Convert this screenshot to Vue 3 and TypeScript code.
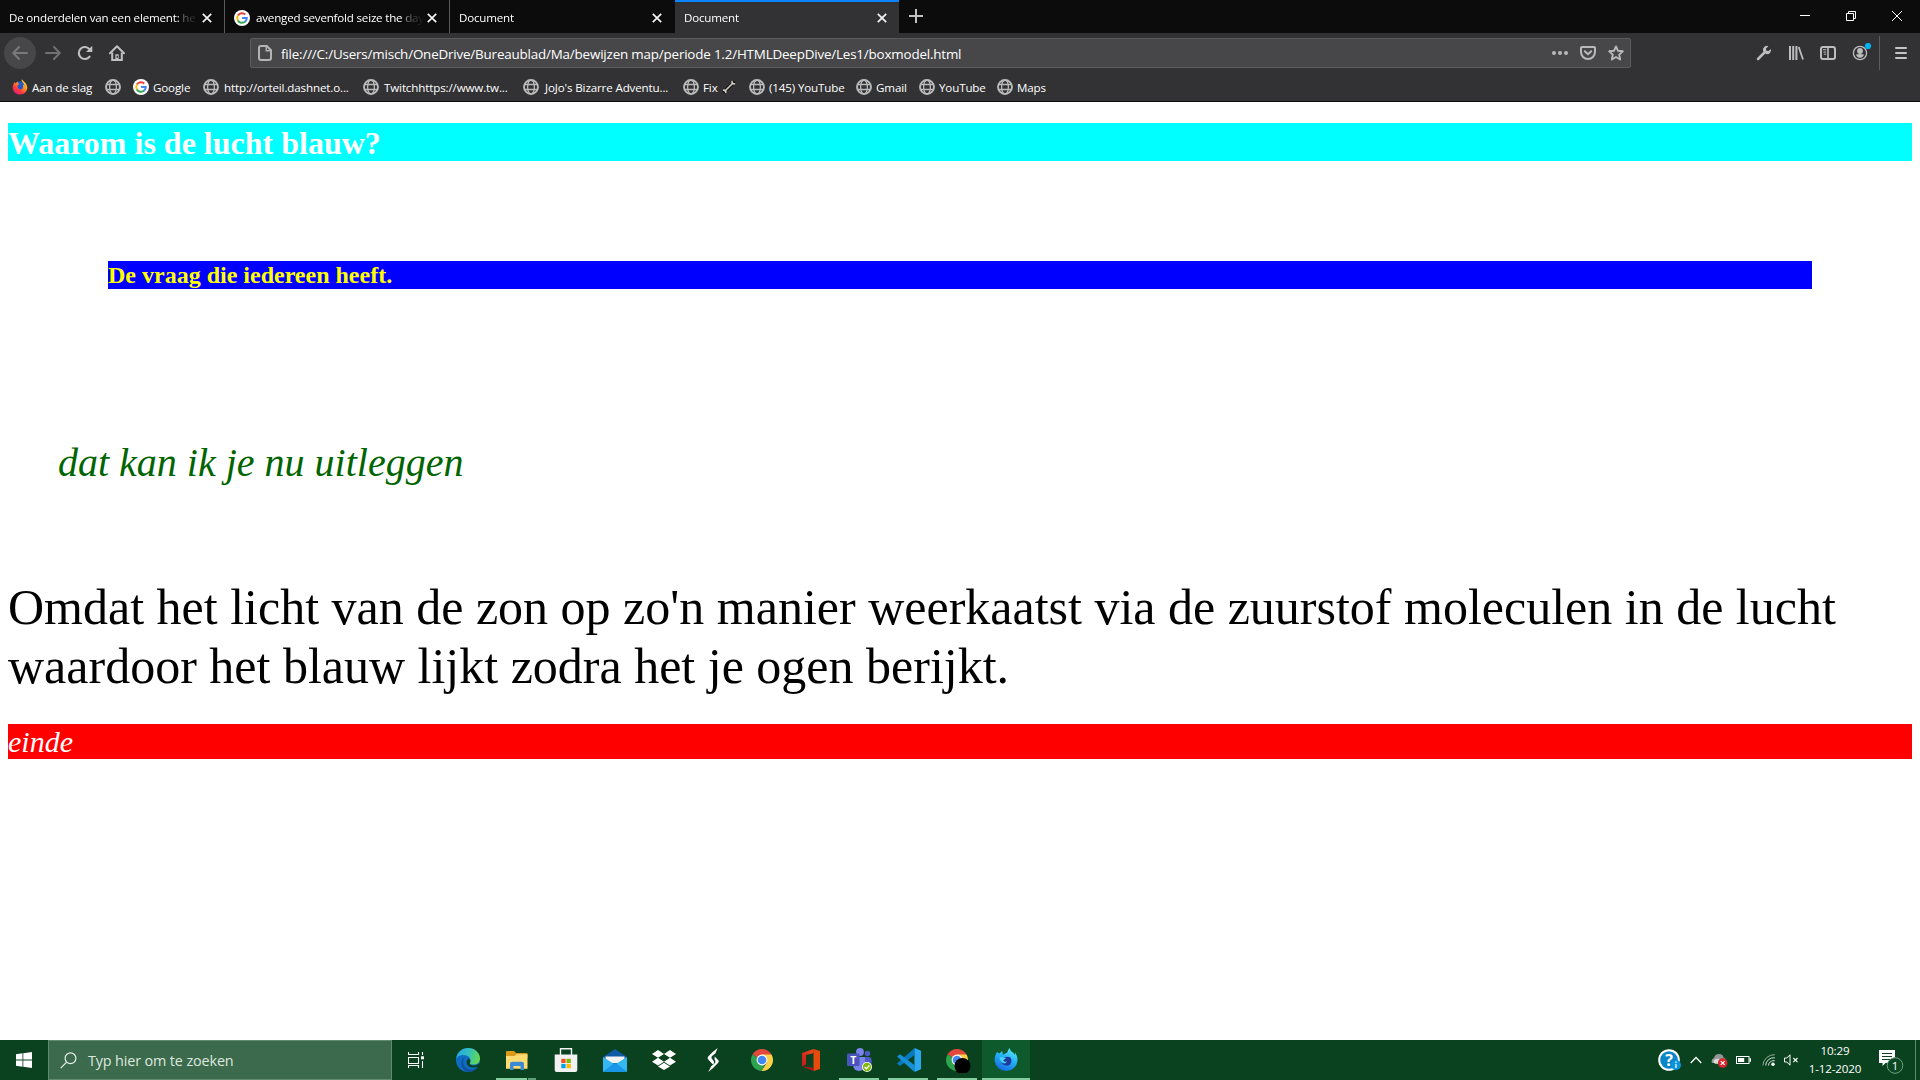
<script setup lang="ts">
interface Tab {
  title: string
  google?: boolean
  active?: boolean
}

interface Bookmark {
  label: string
  icon: 'firefox' | 'globe' | 'google'
  width: number
  gap?: number
  wrench?: boolean
}

const tabs: Tab[] = [
  { title: 'De onderdelen van een element: he' },
  { title: 'avenged sevenfold seize the day', google: true },
  { title: 'Document' },
  { title: 'Document', active: true },
]

const bookmarks: Bookmark[] = [
  { label: 'Aan de slag', icon: 'firefox', width: 93 },
  { label: '', icon: 'globe', width: 28 },
  { label: 'Google', icon: 'google', width: 70 },
  { label: 'http://orteil.dashnet.o...', icon: 'globe', width: 160, gap: 5 },
  { label: 'Twitchhttps://www.tw...', icon: 'globe', width: 160, gap: 5 },
  { label: "JoJo's Bizarre Adventu...", icon: 'globe', width: 160, gap: 6 },
  { label: 'Fix', icon: 'globe', width: 66, wrench: true },
  { label: '(145) YouTube', icon: 'globe', width: 107 },
  { label: 'Gmail', icon: 'globe', width: 63 },
  { label: 'YouTube', icon: 'globe', width: 78 },
  { label: 'Maps', icon: 'globe', width: 60 },
]
</script>

<template>
  <div class="screen">
    <svg class="defs" width="0" height="0">
      <defs>
        <symbol id="google" viewBox="0 0 16 16">
          <circle cx="8" cy="8" r="8" fill="#fff" />
          <path d="M3.9 5.6A4.8 4.8 0 0 1 11.3 4.5" fill="none" stroke="#ea4335" stroke-width="2" />
          <path d="M3.9 5.5A4.9 4.9 0 0 0 3.9 10.5" fill="none" stroke="#fbbc05" stroke-width="2" />
          <path d="M3.9 10.4A4.8 4.8 0 0 0 11.2 11.6" fill="none" stroke="#34a853" stroke-width="2" />
          <path d="M8.1 8H12.8A4.8 4.8 0 0 1 11.1 11.7" fill="none" stroke="#4285f4" stroke-width="2" />
        </symbol>
        <symbol id="globe" viewBox="0 0 16 16">
          <g fill="none" stroke="#b9b9ba">
            <circle cx="8" cy="8" r="7" stroke-width="1.9" />
            <ellipse cx="8" cy="8" rx="3.4" ry="7" stroke-width="1.3" />
            <path d="M1.8 5.5H14.2M1.8 10.5H14.2" stroke-width="1.3" />
          </g>
        </symbol>
        <linearGradient id="foxFire" x1="0.9" y1="0" x2="0.2" y2="1">
          <stop offset="0" stop-color="#fff044" />
          <stop offset="0.4" stop-color="#ff9a1f" />
          <stop offset="0.7" stop-color="#ff3b3b" />
          <stop offset="1" stop-color="#e31587" />
        </linearGradient>
        <linearGradient id="foxBlue" x1="0.8" y1="0" x2="0.3" y2="1">
          <stop offset="0" stop-color="#5ff0f4" />
          <stop offset="0.45" stop-color="#25b2f8" />
          <stop offset="1" stop-color="#1768e0" />
        </linearGradient>
        <linearGradient id="edgeTop" x1="0" y1="0.3" x2="1" y2="0.5">
          <stop offset="0" stop-color="#25a7e0" />
          <stop offset="0.5" stop-color="#33c0c0" />
          <stop offset="1" stop-color="#66d94c" />
        </linearGradient>
        <linearGradient id="officeRed" x1="0" y1="1" x2="1" y2="0">
          <stop offset="0" stop-color="#c4161c" />
          <stop offset="1" stop-color="#f24a1d" />
        </linearGradient>
        <symbol id="firefox" viewBox="0 0 16 16">
          <circle cx="8" cy="8.6" r="6.3" fill="#2358c9" />
          <path d="M2.1 3.2C2.7 3.4 3.2 4 3.3 4.4L5.4 2.6C5.4 3.7 5.8 4.4 7.3 4.8C6.9 5.7 5.7 6 5.5 6.8C5.3 9 6.8 10.7 8.9 10.4C11.5 10.1 11.7 7.1 10.3 5.6C12.4 6 12.3 7.3 12.4 8C12.8 5 10.8 3.6 9.8 2.3C9.4 1.4 9.7.7 10 .2C10.4 2 15.2 3.6 15.3 8.6C15.2 12.8 12.2 15.6 8 15.6C3.6 15.6.7 12.3.7 8.3C.7 6 1.8 5 2.1 3.2Z" fill="url(#foxFire)" />
        </symbol>
        <symbol id="chrome" viewBox="0 0 24 24">
          <path d="M12 12L2.5 6.5A11 11 0 0 1 21.5 6.5Z" fill="#e2493c" />
          <path d="M12 12L2.5 6.5A11 11 0 0 0 11.5 23L16 14Z" fill="#2fa44f" />
          <path d="M12 12V6.5H21.5A11 11 0 0 1 11.5 23L16.8 14.5Z" fill="#fcd14a" />
          <circle cx="12" cy="12" r="5.4" fill="#fff" />
          <circle cx="12" cy="12" r="4.3" fill="#4286ee" />
        </symbol>
      </defs>
    </svg>

    <header class="tabs">
      <div v-for="(tab, i) in tabs" :key="i" class="tab" :class="{ active: tab.active }">
        <svg v-if="tab.google" class="favicon" width="16" height="16"><use href="#google" /></svg>
        <span class="title">{{ tab.title }}</span>
        <svg class="close" width="10" height="10" viewBox="0 0 10 10"><path d="M.8.8L9.2 9.2M9.2.8L.8 9.2" stroke="#f4f4f5" stroke-width="1.7" /></svg>
      </div>
      <svg class="plus" width="14" height="14" viewBox="0 0 14 14"><path d="M7 0V14M0 7H14" stroke="#c2c2c3" stroke-width="2" /></svg>
      <div class="window-controls">
        <svg width="10" height="11" viewBox="0 0 10 11"><path d="M0 5.5H10" stroke="#fff" /></svg>
        <svg width="10" height="10" viewBox="0 0 10 10"><path d="M.5 2.5H7.5V9.5H.5ZM2.5 2.5V.5H9.5V7.5H7.5" fill="none" stroke="#fff" /></svg>
        <svg width="10" height="10" viewBox="0 0 10 10"><path d="M0 0L10 10M10 0L0 10" stroke="#fff" /></svg>
      </div>
    </header>

    <nav class="toolbar">
      <div class="back">
        <svg width="16" height="14" viewBox="0 0 16 14"><path d="M15 7H1.5M7 1L1.2 7L7 13" fill="none" stroke="#79797b" stroke-width="2" stroke-linecap="round" stroke-linejoin="round" /></svg>
      </div>
      <svg class="forward" width="16" height="14" viewBox="0 0 16 14"><path d="M1 7H14.5M9 1L14.8 7L9 13" fill="none" stroke="#707072" stroke-width="2" stroke-linecap="round" stroke-linejoin="round" /></svg>
      <svg class="reload" width="16" height="16" viewBox="0 0 16 16"><path d="M12.4 4.1A6 6 0 1 0 12.6 11.6" fill="none" stroke="#c0c0c1" stroke-width="2.1" stroke-linecap="round" /><path d="M15.3.8V7H9.1Z" fill="#c0c0c1" /></svg>
      <svg class="home" width="16" height="16" viewBox="0 0 16 16"><path d="M1 8.2L8 1.2L15 8.2" fill="none" stroke="#c0c0c1" stroke-width="2" stroke-linecap="round" stroke-linejoin="round" /><path d="M3.2 7.5V15H12.8V7.5" fill="none" stroke="#c0c0c1" stroke-width="2" /><path d="M6.3 15V9.3H9.7V15" fill="#c0c0c1" /><rect x="7.5" y="10.8" width="1.4" height="2" fill="#323234" /></svg>
      <div class="urlbar">
        <svg width="14" height="16" viewBox="0 0 14 16"><path d="M3 1H8.8L13 5.2V13A2 2 0 0 1 11 15H3A2 2 0 0 1 1 13V3A2 2 0 0 1 3 1Z" fill="none" stroke="#b4b4b5" stroke-width="2" /><path d="M8.3 1V5.7H13" fill="none" stroke="#b4b4b5" stroke-width="1.4" /></svg>
        <span class="url">file:///C:/Users/misch/OneDrive/Bureaublad/Ma/bewijzen map/periode 1.2/HTMLDeepDive/Les1/boxmodel.html</span>
        <svg class="dots" width="16" height="4" viewBox="0 0 16 4"><g fill="#b9b9ba"><circle cx="2" cy="2" r="2" /><circle cx="8" cy="2" r="2" /><circle cx="14" cy="2" r="2" /></g></svg>
        <svg class="pocket" width="16" height="14" viewBox="0 0 16 14"><path d="M2.2 1H13.8A1.1 1.1 0 0 1 15 2.1V6A7 7 0 0 1 1 6V2.1A1.1 1.1 0 0 1 2.2 1Z" fill="none" stroke="#b9b9ba" stroke-width="2" /><path d="M4.8 5.2L8 8.2L11.2 5.2" fill="none" stroke="#b9b9ba" stroke-width="2" stroke-linecap="round" stroke-linejoin="round" /></svg>
        <svg class="star" width="16" height="16" viewBox="0 0 16 16"><path d="M8 1.4L10 5.8L14.8 6.3L11.2 9.6L12.2 14.5L8 12L3.8 14.5L4.8 9.6L1.2 6.3L6 5.8Z" fill="none" stroke="#b9b9ba" stroke-width="1.9" stroke-linejoin="round" /></svg>
      </div>
      <div class="tools">
        <svg width="16" height="16" viewBox="0 0 16 16"><path d="M2 14L9 7" stroke="#bdbdbe" stroke-width="2.5" stroke-linecap="round" /><path d="M12.4 1.2A4 4 0 0 0 7 5.9L10.1 9A4 4 0 0 0 14.9 4L12.5 6L10.3 5.8L10 3.6Z" fill="#bdbdbe" /></svg>
        <svg width="16" height="16" viewBox="0 0 16 16"><path d="M2 1V15M5.2 1V15M8.4 1V15" stroke="#bdbdbe" stroke-width="2" /><path d="M10.7 2L15 14.5" stroke="#bdbdbe" stroke-width="1.8" /></svg>
        <svg width="16" height="16" viewBox="0 0 16 16"><rect x="1" y="2" width="14" height="12" rx="2" fill="none" stroke="#bdbdbe" stroke-width="2" /><path d="M8 2V14" stroke="#bdbdbe" stroke-width="1.6" /><path d="M3 4.7H6.3M3.4 7H6.3M3.8 9.2H6.3" stroke="#bdbdbe" /></svg>
        <svg width="20" height="20" viewBox="0 0 20 20"><circle cx="8" cy="11" r="6.6" fill="none" stroke="#bdbdbe" stroke-width="1.3" /><circle cx="8" cy="9" r="2.9" fill="#bdbdbe" /><path d="M3.9 12.4Q8 11.8 12.1 12.4Q10.6 15.8 8 15.8Q5.4 15.8 3.9 12.4Z" fill="#bdbdbe" /><circle cx="16" cy="4" r="3.1" fill="#00b3f4" /></svg>
      </div>
      <svg class="menu" width="12" height="12" viewBox="0 0 12 12"><path d="M1 1H11M1 6H11M1 11H11" stroke="#c4c4c5" stroke-width="2" stroke-linecap="round" /></svg>
    </nav>

    <div class="bookmarks">
      <div v-for="(mark, i) in bookmarks" :key="i" class="bookmark" :style="{ width: mark.width + 'px', gap: (mark.gap ?? 4) + 'px' }">
        <svg width="16" height="16"><use :href="'#' + mark.icon" /></svg>
        <span>{{ mark.label }}</span>
        <svg v-if="mark.wrench" class="wrench" width="14" height="14" viewBox="0 0 14 14"><path d="M2.5 11.5L11.5 2.5" stroke="#111" stroke-width="3.4" stroke-linecap="round" /><path d="M2.5 11.5L11.3 2.7" stroke="#c9c3bb" stroke-width="1.7" /><path d="M1 10.2L2.6 10L3.9 11.4L3.6 13M10 .9L10.3 3.6L13.1 3.9" fill="none" stroke="#d2cdc6" stroke-width="1.5" /></svg>
      </div>
    </div>

    <main class="page">
      <h1>Waarom is de lucht blauw?</h1>
      <h2>De vraag die iedereen heeft.</h2>
      <p class="intro">dat kan ik je nu uitleggen</p>
      <p class="body-text">Omdat het licht van de zon op zo'n manier weerkaatst via de zuurstof moleculen in de lucht waardoor het blauw lijkt zodra het je ogen berijkt.</p>
      <p class="end">einde</p>
    </main>

    <footer class="taskbar">
      <div class="start">
        <svg width="16" height="16" viewBox="0 0 16 16"><path d="M0 2.2L6.5 1.3V7.5H0ZM7.3 1.2L16 0V7.5H7.3ZM0 8.4H6.5V14.7L0 13.8ZM7.3 8.4H16V16L7.3 14.8Z" fill="#fff" /></svg>
      </div>
      <div class="search">
        <svg width="17" height="17" viewBox="0 0 17 17"><circle cx="10.5" cy="6.3" r="5.4" fill="none" stroke="#e8efe9" stroke-width="1.2" /><path d="M6.7 10.2L.7 16.2" stroke="#e8efe9" stroke-width="1.2" /></svg>
        <span>Typ hier om te zoeken</span>
      </div>
      <div class="apps">
        <div class="app view">
          <svg width="16" height="16" viewBox="0 0 16 16"><path d="M.5 0V2.5H10.5V0M.5 16V13.5H10.5V16M.5 5.5H10.5V11.5H.5ZM14.5 0V3M14.5 9V16" fill="none" stroke="#fff" stroke-width="1.1" /><rect x="13" y="4.3" width="3" height="3" fill="#fff" /></svg>
        </div>
        <div class="app">
          <svg width="24" height="24" viewBox="0 0 24 24"><circle cx="12" cy="12" r="12" fill="#0d6dc4" /><path d="M.1 11C1 4 6 0 12 0C19 0 24 5 24 10.4C24 14.2 21.2 16.6 17.5 16.6C15 16.6 13.5 15.8 13.8 14.9C15.4 13.3 14.8 9 10.5 7.4C6.5 6 1.5 7.5.1 11Z" fill="url(#edgeTop)" /><path d="M8.8 9.2C5.4 13 7.4 20 13.2 21.6C16.6 22.5 20 21 22.3 18.3C19.8 22 16 24 12 24C6.6 22.5 4.5 17.3 5.5 13.3C6 11.2 7.2 9.9 8.8 9.2Z" fill="#124f9f" /><path d="M13.8 14.9C13.2 16 14.9 17.5 17.8 17.5C20 17.5 21.7 16.7 24 15L23.4 18.5C19 20.2 13 20 11.2 16.7C10 14.5 10.7 12 12.3 10.6C14.7 11.5 14.6 13.8 13.8 14.9Z" fill="#0a421f" /></svg>
        </div>
        <div class="app running stacked">
          <svg width="22" height="19" viewBox="0 0 22 19"><path d="M0 1A1 1 0 0 1 1 0H8L10 2H20.5A1 1 0 0 1 21.5 3V7H0Z" fill="#dc9a17" /><path d="M0 5H8.5L10.5 3.3H21.5V17.8H0Z" fill="#ffdc73" /><path d="M4 19V12.5A2 2 0 0 1 6 10.7H16A2 2 0 0 1 18 12.5V19H14.5V15H7.5V19Z" fill="#398bd4" /></svg>
        </div>
        <div class="app">
          <svg width="24" height="24" viewBox="0 0 24 24"><path d="M6.5 7V.7H17.5V7" fill="none" stroke="#f2f2f2" stroke-width="1.4" /><path d="M.7 6.5H23.3V22A2 2 0 0 1 21.3 24H2.7A2 2 0 0 1 .7 22Z" fill="#f2f2f2" /><path d="M7.3 10.8H11.6V15H7.3Z" fill="#f05122" /><path d="M12.5 10.8H16.8V15H12.5Z" fill="#7db900" /><path d="M7.3 15.9H11.6V20.2H7.3Z" fill="#00a2ed" /><path d="M12.5 15.9H16.8V20.2H12.5Z" fill="#fdb900" /></svg>
        </div>
        <div class="app">
          <svg width="24" height="23" viewBox="0 0 24 23"><path d="M0 8L12 0L24 8V14H0Z" fill="#0c59a4" /><path d="M2.5 7.5H21.5V14H2.5Z" fill="#f2f2f2" /><path d="M0 8L12 15.5L0 23ZM24 8L12 15.5L24 23Z" fill="#35b8f1" /><path d="M0 23L10.5 14.5Q12 13.5 13.5 14.5L24 23Z" fill="#1a96e8" /></svg>
        </div>
        <div class="app">
          <svg width="24" height="20" viewBox="0 0 24 20"><path d="M6 0L12 3.9L6 7.8L0 3.9ZM18 0L24 3.9L18 7.8L12 3.9ZM6 7.8L12 11.7L6 15.5L0 11.7ZM18 7.8L24 11.7L18 15.5L12 11.7ZM12 12.7L18 16.4L12 20L6 16.4Z" fill="#fff" /></svg>
        </div>
        <div class="app">
          <svg width="12" height="24" viewBox="0 0 12 24"><path d="M10.7 0Q6.5 3 1.2 8.4Q0 9.8 1 11.2L5 15.6Q6 16.9 6.9 15.4Q7.4 14 6.6 13L4.6 10.3Q4 9 5 7.9L8.3 5.6Z" fill="#fff" /><path d="M1.3 24Q6.5 20 11 15Q12.3 13.6 11.4 12.2L7.7 8.4L7.5 11.6Q9 13.5 8 15L4.2 18.2Z" fill="#fff" /></svg>
        </div>
        <div class="app">
          <svg width="24" height="24"><use href="#chrome" /></svg>
        </div>
        <div class="app">
          <svg width="18" height="22" viewBox="0 0 18 22"><path d="M11.5 0L0 4V17.5L4 15.5V6L11.5 4.2Z" fill="url(#officeRed)" /><path d="M11.5 0L18 2V20L11.5 22Z" fill="#e64a0c" /><path d="M0 17.6L11.5 18.8V22Z" fill="#b9151b" /></svg>
        </div>
        <div class="app running">
          <svg class="teams" width="25" height="24" viewBox="0 0 25 24"><circle cx="20.5" cy="5.5" r="2.7" fill="#5059c9" /><rect x="16" y="9" width="8.5" height="10" rx="3" fill="#5059c9" /><circle cx="13" cy="4" r="3.9" fill="#7b83eb" /><path d="M6 9H18V17A6 6 0 0 1 6 17Z" fill="#7b83eb" /><rect x="0" y="5.5" width="12.5" height="12.5" rx="1" fill="#4b53bc" /><text x="6.2" y="15.5" text-anchor="middle" font-size="10.5" font-weight="700" font-family="Open Sans, sans-serif" fill="#fff">T</text><circle cx="20" cy="19" r="5" fill="#fff" /><circle cx="20" cy="19" r="4.2" fill="#82b90f" /><path d="M17.6 19L19.4 20.8L22.4 17.5" fill="none" stroke="#fff" stroke-width="1.4" /></svg>
        </div>
        <div class="app running">
          <svg width="24" height="24" viewBox="0 0 24 24"><path d="M17.5 0V7L3 18L0 15.6Z" fill="#0879bf" /><path d="M17.5 24V17L3 6.2L0 8.6Z" fill="#168ed6" /><path d="M17.5 0L24 2.8V21.2L17.5 24Z" fill="#2aa7ee" /></svg>
        </div>
        <div class="app running">
          <svg width="26" height="25" viewBox="0 0 26 25"><use href="#chrome" width="24" height="24" /><circle cx="17.5" cy="18" r="8" fill="#000" /></svg>
        </div>
        <div class="app current">
          <svg width="24" height="24" viewBox="0 0 24 24"><path d="M3 4L5.2 5.5L8.2 3L9 6.7L13.2 4.6Q14 1.8 15.5 0Q16 3 19 4.5L21 7V4.3Q23.7 8 23.4 12.5A11.4 11.4 0 0 1 .7 13Q.4 7.5 3 4Z" fill="url(#foxBlue)" /><path d="M6.8 10.5Q8.5 8.5 12 9.1Q14.2 8 16.5 9.8Q18.8 13.5 15.7 16.7Q12.5 18.6 9 16.5Q6.2 14 6.8 10.5Z" fill="#22379b" /><path d="M5.5 9.4Q8.5 8.3 12 10L9.2 12.4Q10.5 14.8 13.3 13.2Q11 17 7.5 14.3Q5.8 12.4 5.5 9.4Z" fill="#43d3f5" /></svg>
        </div>
      </div>
      <div class="tray">
        <svg class="help" width="24" height="22" viewBox="0 0 24 22"><circle cx="11" cy="11" r="10.8" fill="#fff" /><circle cx="11" cy="11" r="8.8" fill="#0b86c9" /><text x="11" y="17" text-anchor="middle" font-size="16" font-weight="700" font-family="Open Sans, sans-serif" fill="#fff">?</text><circle cx="18" cy="16" r="5" fill="#0894df" /><path d="M18 12.5V14M18 15V19" stroke="#fff" stroke-width="1.3" /></svg>
        <svg class="chevron" width="12" height="8" viewBox="0 0 12 8"><path d="M.7 7L6 1.5L11.3 7" fill="none" stroke="#fff" stroke-width="1.3" /></svg>
        <svg class="cloud" width="17" height="15" viewBox="0 0 17 15"><path d="M1 10Q-.4 6.5 3 5Q4 .7 8.3 1Q12 1.2 12.5 4.5Q15 5 14.5 8L13 10Z" fill="#929895" /><path d="M4 10.8Q1 8 4 6.3Q8 5 10 7L10 11Z" fill="#dadddb" /><circle cx="11.7" cy="10" r="4.8" fill="#d6282d" /><path d="M9.8 8.1L13.6 11.9M13.6 8.1L9.8 11.9" stroke="#fff" stroke-width="1.2" /></svg>
        <svg class="battery" width="15" height="8" viewBox="0 0 15 8"><rect x=".5" y=".5" width="12.5" height="7" fill="none" stroke="#fff" /><rect x="2" y="2" width="6.2" height="4" fill="#fff" /><rect x="13.5" y="2.2" width="1.5" height="3.6" fill="#fff" /></svg>
        <svg class="wifi" width="13" height="12" viewBox="0 0 13 12"><g fill="none" stroke="#d9e2dc"><path d="M.8 11.5A11.5 11.5 0 0 1 12.8.7" stroke="#91a99a" /><path d="M3.7 11.5A8 8 0 0 1 12.8 3.8" /><path d="M6.5 11.5A5 5 0 0 1 12.8 6.8" /></g><circle cx="11" cy="10.3" r="1.7" fill="#fff" /></svg>
        <svg class="sound" width="15" height="12" viewBox="0 0 15 12"><path d="M.5 4H2.8L6 .8V11.2L2.8 8H.5Z" fill="none" stroke="#fff" /><path d="M9.3 4L13.5 8.2M13.5 4L9.3 8.2" stroke="#fff" stroke-width="1.1" /></svg>
        <div class="clock"><span>10:29</span><span class="date">1-12-2020</span></div>
        <svg class="notice" width="25" height="24" viewBox="0 0 25 24"><path d="M0 0H16V13H6.5L3.5 16V13H0Z" fill="#fff" /><path d="M3 3.5H13M3 6.5H13M3 9.5H13" stroke="#0a421f" /><circle cx="16" cy="15.5" r="7.8" fill="#0c4723" stroke="#6f9e80" /><text x="16" y="19.7" text-anchor="middle" font-size="11.5" font-family="Open Sans, sans-serif" fill="#fff">1</text></svg>
        <div class="peek"></div>
      </div>
    </footer>
  </div>
</template>

<style>
body {
  margin: 0;
  background: #fff;
}
</style>

<style scoped>
.screen {
  width: 1920px;
  height: 1080px;
  display: flex;
  flex-direction: column;
  overflow: hidden;
  background: #fff;
  font-family: "Open Sans", "Noto Sans", sans-serif;
  font-size: 11.6px;
  letter-spacing: -0.14px;
  color: #fff;
}
.defs {
  position: absolute;
}
svg {
  flex: none;
  display: block;
}

/* Tab strip */
.tabs {
  height: 33px;
  flex: none;
  display: flex;
  background: #0c0c0d;
}
.tab {
  width: 225px;
  height: 33px;
  box-sizing: border-box;
  display: flex;
  align-items: center;
  padding: 2px 12px 0 9px;
  border-right: 1px solid #5b5b5c;
}
.tab:nth-child(3) {
  border-right-color: #0c0c0d;
}
.tab.active {
  width: 224px;
  padding-right: 12px;
  border-right: 0;
  background: #323234;
  border-top: 2px solid #0a84ff;
  padding-top: 0;
}
.favicon {
  margin-right: 6px;
}
.title {
  flex: 1;
  min-width: 0;
  margin-right: 3px;
  letter-spacing: -0.2px;
  white-space: nowrap;
  mask-image: linear-gradient(to left, transparent 0, rgba(0, 0, 0, 0.38) 16px, #000 21px);
}
.plus {
  margin: 9px 0 0 10px;
}
.window-controls {
  margin-left: auto;
  display: flex;
  align-items: center;
  gap: 36px;
  padding: 0 18px 2px 0;
}

/* Navigation */
.toolbar {
  height: 40px;
  flex: none;
  display: flex;
  align-items: center;
  background: #323234;
}
.back {
  width: 32px;
  height: 32px;
  margin-left: 4px;
  border-radius: 50%;
  background: #474749;
  display: flex;
  align-items: center;
  justify-content: center;
}
.forward {
  margin-left: 9px;
}
.reload {
  margin-left: 16px;
}
.home {
  margin-left: 16px;
}
.urlbar {
  width: 1381px;
  height: 30px;
  box-sizing: border-box;
  margin-left: 125px;
  padding: 0 6px 0 7px;
  display: flex;
  align-items: center;
  background: #474749;
  border: 1px solid #5c5c5e;
  border-radius: 2px;
}
.url {
  margin-left: 9px;
  margin-right: auto;
  padding-top: 2px;
  font-size: 13.4px;
  letter-spacing: -0.18px;
  white-space: nowrap;
}
.pocket {
  margin-left: 12px;
}
.star {
  margin-left: 12px;
}
.tools {
  margin-left: 125px;
  display: flex;
  align-items: center;
  gap: 16px;
}
.tools svg:last-child {
  margin-top: -2px;
}
.menu {
  box-sizing: content-box;
  padding: 11px 0 11px 15px;
  margin-left: 7px;
  border-left: 1px solid #5c5c5e;
}

/* Bookmarks */
.bookmarks {
  height: 29px;
  box-sizing: border-box;
  flex: none;
  display: flex;
  padding: 0 0 1px 12px;
  background: #323234;
  border-bottom: 1px solid #0c0c0d;
}
.bookmark {
  flex: none;
  display: flex;
  align-items: center;
  white-space: nowrap;
}
.bookmark span {
  margin-top: 1px;
}

/* Document */
.page {
  height: 938px;
  flex: none;
  box-sizing: border-box;
  padding: 21px 8px 0;
  font-family: "Liberation Serif", "Times New Roman", serif;
  letter-spacing: 0;
  color: #000;
}
h1,
h2,
p {
  margin: 0;
}
h1 {
  padding-top: 2px;
  background: #0ff;
  color: #fff;
  font-size: 32px;
  line-height: 36px;
}
h2 {
  margin: 100px;
  background: #00f;
  color: #ff0;
  font-size: 24px;
  line-height: 28px;
}
.intro {
  margin: 151px 50px 0;
  font-size: 40px;
  line-height: 46px;
  font-style: italic;
  color: #006400;
}
.body-text {
  margin-top: 92px;
  font-size: 50px;
  line-height: 59px;
}
.end {
  margin-top: 28px;
  background: #f00;
  color: #fff;
  font-size: 30px;
  line-height: 35px;
  font-style: italic;
}

/* Taskbar */
.taskbar {
  height: 40px;
  flex: none;
  display: flex;
  background: #0a421f;
}
.start {
  width: 48px;
  display: flex;
  align-items: center;
  justify-content: center;
}
.search {
  width: 344px;
  box-sizing: border-box;
  padding-left: 11px;
  display: flex;
  align-items: center;
  background: #3b6a4c;
  border: 1px solid #628a70;
  font-size: 14.4px;
  color: #dde7df;
}
.search span {
  margin-left: 11px;
}
.apps {
  display: flex;
}
.app {
  width: 49px;
  height: 40px;
  box-sizing: border-box;
  display: flex;
  align-items: center;
  justify-content: center;
  position: relative;
}
.app.view {
  width: 51px;
  padding-right: 3px;
}
.running::after {
  content: "";
  position: absolute;
  left: 4px;
  bottom: 0;
  width: 40px;
  height: 2px;
  background: #85cda0;
}
.stacked::after {
  background: linear-gradient(to right, #85cda0 31px, #0a421f 31px 32px, #5f9d76 32px);
}
.current {
  background: #0f5a2d;
  border-bottom: 2px solid #85cda0;
  width: 48px;
  padding-top: 2px;
}
.tray {
  margin-left: auto;
  display: flex;
  align-items: center;
}
.chevron {
  margin-left: 8px;
}
.cloud {
  margin-left: 9px;
}
.battery {
  margin-left: 8px;
}
.wifi {
  margin-left: 11px;
}
.sound {
  margin-left: 9px;
}
.clock {
  width: 58px;
  margin-left: 7px;
  display: flex;
  flex-direction: column;
  align-items: center;
  line-height: 18px;
  white-space: nowrap;
}
.notice {
  margin-left: 15px;
  margin-top: 4px;
}
.peek {
  width: 4px;
  height: 40px;
  margin-left: 11px;
  border-left: 1px solid #628a70;
}
</style>
